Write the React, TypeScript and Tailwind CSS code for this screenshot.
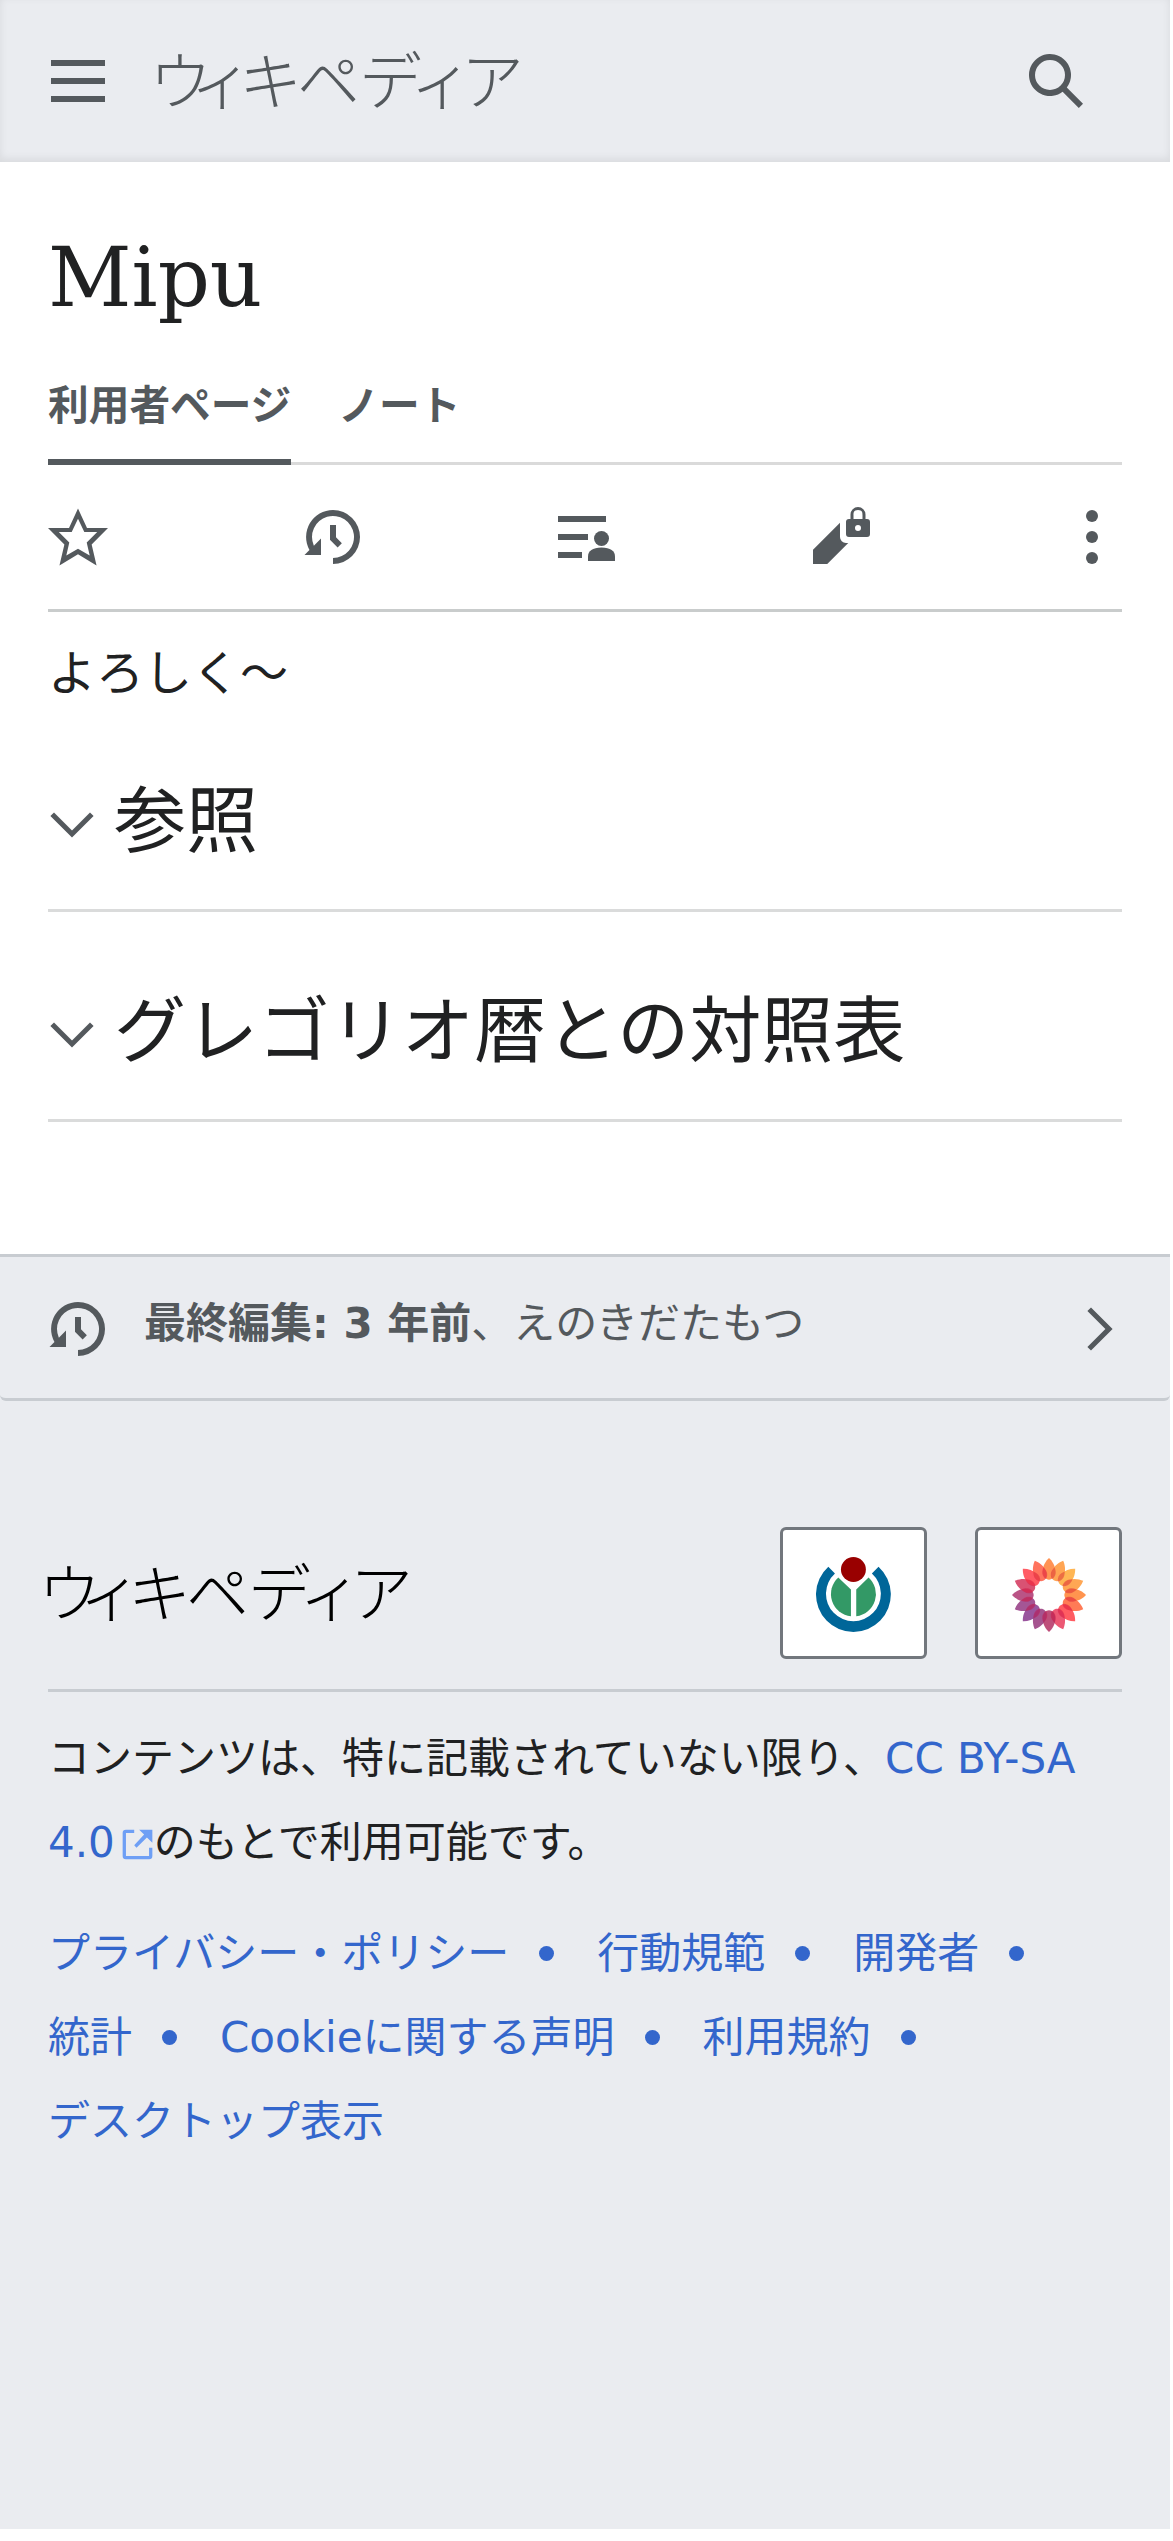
import React from 'react';

type IconProps = { className?: string; children: React.ReactNode };

function Icon({ className = 'size-[60px] text-[#54595d]', children }: IconProps) {
  return (
    <svg viewBox="0 0 20 20" className={`block shrink-0 fill-current ${className}`} aria-hidden="true">
      {children}
    </svg>
  );
}

function HistoryIcon() {
  return (
    <Icon>
      <path d="M9 6v5h.06l2.48 2.47 1.41-1.41L11 10.11V6z" />
      <path d="M10 1a9 9 0 0 0-7.85 13.35L.5 16H6v-5.5l-2.38 2.38A7 7 0 1 1 10 17v2a9 9 0 0 0 0-18" />
    </Icon>
  );
}

function Wordmark({ className }: { className: string }) {
  return (
    <svg viewBox="-15 -30 400 120" className={`block h-[120px] w-[400px] shrink-0 fill-current ${className}`}>
      <text x="-7 34 83 141 203 254 305" y="56" fontSize="63" className="font-['Noto_Sans_CJK_JP',sans-serif] font-light">
        ウィキペディア
      </text>
    </svg>
  );
}

function WikimediaLogo() {
  return (
    <svg viewBox="198 170.5 225.5 225.5" className="mt-[3px] block size-[75px]">
      <path fill="#069" d="M235 200A112.500 112.500 0 1 0 386 200L366 220A82.500 82.500 0 1 1 255 220Z" />
      <path fill="#396" d="M303 349A67.500 67.500 0 0 1 265 232L303 268Z" />
      <path fill="#396" d="M319 349A67.500 67.500 0 0 0 356 232L319 268Z" />
      <circle cx="310.500" cy="208" r="37.500" fill="#900" />
    </svg>
  );
}

const petals = [
  '#ff8a45', '#ff9d45', '#ffb045', '#ffa045', '#ff8b40', '#ff7048', '#ff4e55', '#ea4a68',
  '#b8406f', '#9d4585', '#914796', '#9c488c', '#b4457c', '#d64367', '#ff4e58', '#ff6850',
];

function FlowerLogo() {
  return (
    <svg viewBox="-111 -111 222 222" className="mt-[3px] block size-[74px]">
      {petals.map((color, i) => (
        <path
          key={color}
          fill={color}
          fillOpacity={0.92}
          transform={`rotate(${i * 22.5})`}
          d="M0-111C10-102 19-87 19-71C19-56 10-46 0-46C-10-46-19-56-19-71C-19-87-10-102 0-111"
        />
      ))}
      {petals.map((color, i) => (
        <path
          key={color}
          fill="#d0103c"
          fillOpacity={0.4}
          transform={`rotate(${i * 22.5 + 11.25})`}
          d="M0-85C5-77 8-70 7-63C6-56 3-51 0-48C-3-51-6-56-7-63C-8-70-5-77 0-85"
        />
      ))}
    </svg>
  );
}

function Section({ title }: { title: string }) {
  return (
    <section className="flex h-[210px] border-b-[3px] border-[#dadbdb]">
      <Icon className="mt-[99px] size-12 text-[#54595d]">
        <path d="m17.500 4.750-7.500 7.500-7.500-7.500L1 6.250l9 9 9-9z" />
      </Icon>
      <h2 className="ml-[18px] mt-[71px] text-[72px] leading-[96px] text-[#202122]">{title}</h2>
    </section>
  );
}

const links = ['プライバシー・ポリシー', '行動規範', '開発者', '統計', 'Cookieに関する声明', '利用規約', 'デスクトップ表示'];

export default function App() {
  return (
    <div lang="ja" className="h-[2541px] w-[1173px] overflow-hidden bg-white font-['DejaVu_Sans','Noto_Sans_CJK_JP',sans-serif] text-[#202122]">
      <div className="w-[1170px]">
        <header className="flex h-[162px] items-start bg-[#eaecf0] pl-12 pr-[84px] pt-[51px] shadow-[inset_0_-3px_9px_rgba(0,0,0,0.08)]">
          <Icon>
            <path d="M1 3v2h18V3zm0 8h18V9H1zm0 6h18v-2H1z" />
          </Icon>
          <Wordmark className="-mt-[33px] ml-[33px] text-[#54595d]" />
          <Icon className="ml-auto size-[60px] text-[#54595d]">
            <path d="M12.200 13.600a7 7 0 1 1 1.400-1.400l5.400 5.400-1.400 1.400zM3 8a5 5 0 1 0 10 0A5 5 0 0 0 3 8" />
          </Icon>
        </header>

        <main className="px-12 pb-[132px] pt-[63px]">
          <h1 className="h-[105px] font-['DejaVu_Serif',serif] text-[81.6px] leading-[106px]">Mipu</h1>
          <nav className="flex h-[135px] gap-[47px] border-b-[3px] border-[#dadada] text-[40.7px] font-bold leading-[60px] text-[#54595d]">
            <a className="h-[135px] border-b-[6px] border-[#54595d] pt-[46px]">利用者ページ</a>
            <a className="pt-[46px]">ノート</a>
          </nav>
          <div className="grid h-[147px] grid-cols-[255px_252px_255px_252px_60px] border-b-[3px] border-[#c9cccc] pt-[42px]">
            <Icon>
              <path d="M20 7h-7L10 .5 7 7H0l5.460 5.470-1.640 7 6.180-3.700 6.180 3.730-1.630-7zm-10 6.900-3.900 2.300 1-4.400-3.500-3.500h4.300L10 3.900l2.100 4.400h4.300l-3.500 3.500 1 4.400z" />
            </Icon>
            <HistoryIcon />
            <Icon>
              <path d="M1 3h16v2H1zm0 6h10v2H1zm0 6h8v2H1z" />
              <circle cx="15.500" cy="10.500" r="2.500" />
              <path d="M15.500 13.500c-3 0-4.500 1.200-4.500 3V18h9v-1.500c0-1.800-1.500-3-4.500-3" />
            </Icon>
            <Icon>
              <path d="M12 12a2 2 0 0 1-2-2V5.250l-9 9V19h4.750l7-7zm7-8h-.5V2.500a2.500 2.500 0 0 0-5 0V4H13a1 1 0 0 0-1 1v4a1 1 0 0 0 1 1h6a1 1 0 0 0 1-1V5a1 1 0 0 0-1-1m-3 4a1 1 0 1 1 1-1 1 1 0 0 1-1 1m1.500-4h-3V2.750C14.500 2 14.500 1 16 1s1.500 1 1.500 1.750z" />
            </Icon>
            <Icon>
              <circle cx="10" cy="3" r="2" />
              <circle cx="10" cy="10" r="2" />
              <circle cx="10" cy="17" r="2" />
            </Icon>
          </div>
          <p className="h-[90px] pt-[25px] text-[48px] leading-[72px]">よろしく〜</p>
          <Section title="参照" />
          <Section title="グレゴリオ暦との対照表" />
        </main>

        <footer className="h-[1275px] bg-[#eaecf0]">
          <div className="flex h-[147px] rounded-b-[6px] border-y-[3px] border-[#c8ccd1] pl-12 pr-[46px] text-[#54595d]">
            <div className="mt-[42px]">
              <HistoryIcon />
            </div>
            <p className="ml-9 mt-[37px] text-[42px] leading-[60px]">
              <b>最終編集: 3 年前</b>、えのきだたもつ
            </p>
            <Icon className="ml-auto mt-12 size-12">
              <path d="M6.250 1l-1.500 1.500 7.500 7.500-7.500 7.500 1.500 1.500 9-9z" />
            </Icon>
          </div>

          <div className="px-12 pt-[126px]">
            <div className="flex h-[165px] border-b-[3px] border-[#c8ccd1]">
              <Wordmark className="-ml-[18px] mt-[3px] text-black" />
              <div className="ml-auto flex h-[132px] w-[147px] items-center justify-center rounded-[6px] border-[3px] border-[#72777d] bg-white">
                <WikimediaLogo />
              </div>
              <div className="ml-12 flex h-[132px] w-[147px] items-center justify-center rounded-[6px] border-[3px] border-[#72777d] bg-white">
                <FlowerLogo />
              </div>
            </div>
            <p className="mt-[25px] text-[42px] leading-[84px]">
              コンテンツは、特に記載されていない限り、
              <a className="text-[#36c]">
                CC BY-SA
                <br />
                4.0
                <svg viewBox="0 0 20 20" className="-mb-[4px] ml-[6px] inline-block size-[33px] fill-[#6e9ff5] align-baseline">
                  <path d="M17 17H3V3h5V1H3a2 2 0 0 0-2 2v14a2 2 0 0 0 2 2h14a2 2 0 0 0 2-2v-5h-2z" />
                  <path d="M19 1h-8l3 3-6 6.500 1.400 1.400L15.700 5.700 19 9z" />
                </svg>
              </a>
              のもとで利用可能です。
            </p>
            <ul className="mt-[27px] flex flex-wrap text-[42px] leading-[84px] text-[#36c]">
              {links.map((link, i) => (
                <li key={link} className="flex items-center">
                  <a>{link}</a>
                  {i < links.length - 1 && <span className="-mt-[2px] ml-[30px] mr-[43px] size-[15px] rounded-full bg-[#36c]" />}
                </li>
              ))}
            </ul>
          </div>
        </footer>
      </div>
    </div>
  );
}
